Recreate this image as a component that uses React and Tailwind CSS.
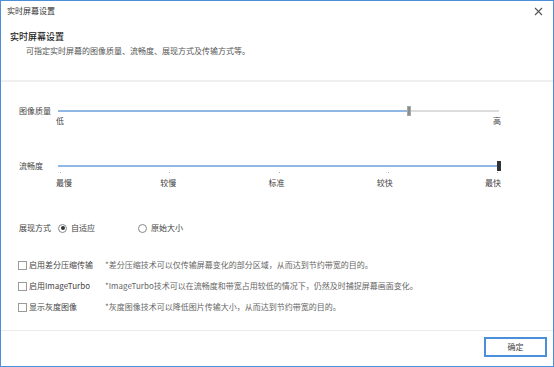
import React from 'react';

const font = { fontFamily: '"Noto Sans CJK SC", "Noto Sans", sans-serif' };

// fixed track from x=58 to x=499
function Track({ value, dark }) {
  const pct = value * 100;
  return (
    <div className="relative w-[441px] h-[10px] flex items-center">
      <div className="w-full h-[2px] bg-[#dcdcdc] relative">
        <div className="absolute left-0 top-0 h-[2px] bg-[#8fb9e4]" style={{ width: pct + '%' }} />
      </div>
      <div
        className={
          dark
            ? 'absolute top-0 h-[10px] w-[4px] bg-[#333] -translate-x-1/2'
            : 'absolute top-0 h-[10px] w-[4px] bg-[#8c8c8c] border border-[#a8a8a8] -translate-x-1/2'
        }
        style={{ left: pct + '%' }}
      />
    </div>
  );
}

function Check({ label, desc }) {
  return (
    <div className="flex items-center h-[12px]">
      <div className="w-[9px] h-[9px] border border-[#9a9a9a] bg-white" />
      <span className="ml-[2px] w-[76px] text-[#444]">{label}</span>
      <span className="text-[#666]">{desc}</span>
    </div>
  );
}

function Radio({ checked, label, w }) {
  return (
    <div className={'flex items-center ' + w}>
      <div className="w-[9px] h-[9px] rounded-full border border-[#888] flex items-center justify-center">
        {checked && <div className="w-[4px] h-[4px] rounded-full bg-[#333]" />}
      </div>
      <span className="ml-[4px] text-[#444]">{label}</span>
    </div>
  );
}

export default function App() {
  return (
    <div className="w-[554px] h-[367px] bg-white border border-[#4a8fd8] flex flex-col text-[8px] leading-none" style={font}>
      {/* title bar */}
      <div className="h-[20px] flex items-center justify-between pl-[6px] pr-[10px]">
        <span className="text-[#333]">实时屏幕设置</span>
        <svg width="9" height="9" viewBox="0 0 9 9" className="text-[#555]">
          <path d="M1 1 L8 8 M8 1 L1 8" stroke="currentColor" strokeWidth="1.1" />
        </svg>
      </div>

      {/* header */}
      <div className="pt-[9px] pl-[9px]">
        <div className="h-[12px] flex items-center text-[9px] font-medium text-[#222]">实时屏幕设置</div>
        <div className="h-[12px] mt-[3px] flex items-center pl-[16px] text-[#555]">
          可指定实时屏幕的图像质量、流畅度、展现方式及传输方式等。
        </div>
      </div>
      <div className="mt-[23px] h-[2px] bg-[#f0f0f0]" />

      {/* quality */}
      <div className="mt-[24px] pl-[18px]">
        <div className="flex items-center h-[10px]">
          <span className="w-[39px] text-[#444]">图像质量</span>
          <Track value={0.796} />
        </div>
        <div className="h-[10px] flex items-center justify-between ml-[37px] w-[445px] text-[#444]">
          <span>低</span>
          <span>高</span>
        </div>
      </div>

      {/* fluency */}
      <div className="mt-[35px] pl-[18px]">
        <div className="flex items-center h-[10px]">
          <span className="w-[39px] text-[#444]">流畅度</span>
          <Track value={1} dark />
        </div>
        <div className="h-[3px] flex items-start justify-between ml-[41px] w-[438px]">
          {[0, 1, 2, 3, 4].map((i) => (
            <div key={i} className="w-[1px] h-[1px] mt-[1px] bg-[#aaa]" />
          ))}
        </div>
        <div className="h-[10px] mt-[4px] flex items-center justify-between ml-[37px] w-[445px] text-[#444]">
          <span>最慢</span>
          <span className="-ml-[4px]">较慢</span>
          <span>标准</span>
          <span>较快</span>
          <span>最快</span>
        </div>
      </div>

      {/* display mode */}
      <div className="mt-[34px] pl-[18px] flex items-center h-[12px]">
        <span className="w-[39px] text-[#444]">展现方式</span>
        <Radio checked label="自适应" w="w-[80px]" />
        <Radio label="原始大小" w="" />
      </div>

      {/* options */}
      <div className="mt-[25px] pl-[17px] flex flex-col gap-[9px]">
        <Check label="启用差分压缩传输" desc="*差分压缩技术可以仅传输屏幕变化的部分区域，从而达到节约带宽的目的。" />
        <Check label="启用ImageTurbo" desc="*ImageTurbo技术可以在流畅度和带宽占用较低的情况下，仍然及时捕捉屏幕画面变化。" />
        <Check label="显示灰度图像" desc="*灰度图像技术可以降低图片传输大小，从而达到节约带宽的目的。" />
      </div>

      {/* footer */}
      <div className="mt-[17px] h-[1px] bg-[#ebebeb]" />
      <div className="flex justify-end pt-[6px] pr-[6px]">
        <button className="w-[63px] h-[20px] border-2 border-[#4a8fd8] bg-white text-[#444] text-[8px] flex items-center justify-center">
          确定
        </button>
      </div>
    </div>
  );
}
